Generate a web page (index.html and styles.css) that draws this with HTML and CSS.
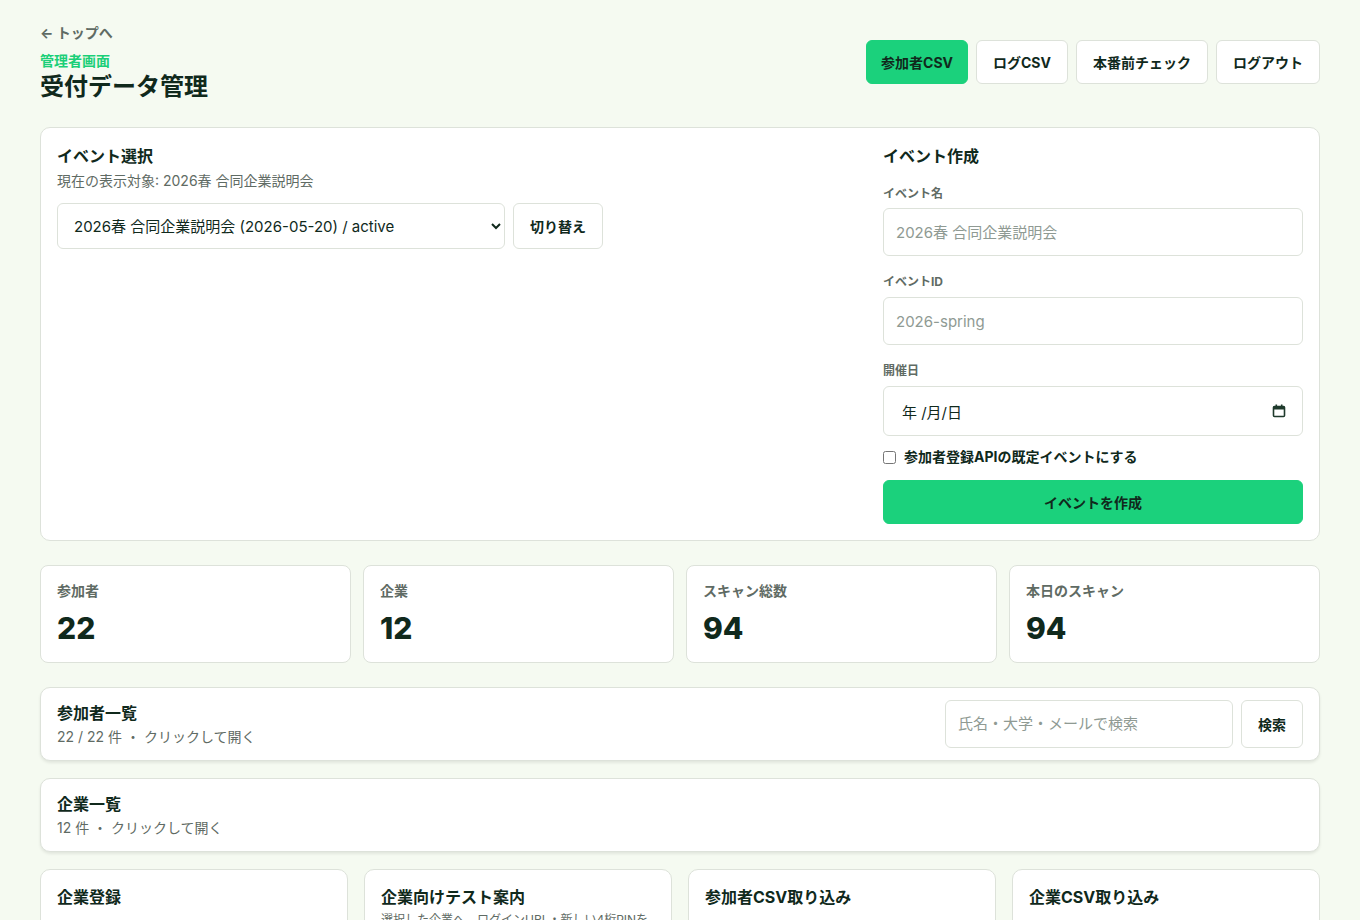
FILE: index.html
```html
<!DOCTYPE html>
<html lang="ja">
  <head>
    <meta charset="UTF-8" />
    <meta name="viewport" content="width=device-width, initial-scale=1.0" />
    <title>受付データ管理</title>
    <link rel="stylesheet" href="styles.css">
  </head>
  <body>
    <div class="page">
      <header class="page-header">
        <div>
          <a class="back-link" href="#">← トップへ</a>
          <p class="eyebrow">管理者画面</p>
          <h1>受付データ管理</h1>
        </div>
        <nav class="header-actions">
          <button class="btn btn-primary">参加者CSV</button>
          <button class="btn">ログCSV</button>
          <button class="btn">本番前チェック</button>
          <button class="btn">ログアウト</button>
        </nav>
      </header>

      <section class="panel event-panel">
        <div class="event-select">
          <h2>イベント選択</h2>
          <p class="muted">現在の表示対象: 2026春 合同企業説明会</p>
          <div class="select-row">
            <select class="field select">
              <option>2026春 合同企業説明会 (2026-05-20) / active</option>
            </select>
            <button class="btn">切り替え</button>
          </div>
        </div>
        <form class="event-create">
          <h2>イベント作成</h2>
          <label class="label first">イベント名</label>
          <input class="field" type="text" placeholder="2026春 合同企業説明会">
          <label class="label">イベントID</label>
          <input class="field" type="text" placeholder="2026-spring">
          <label class="label">開催日</label>
          <div class="field date-field">
            <span>年 /月/日</span>
            <svg width="14" height="14" viewBox="0 0 14 14">
              <rect x="1.5" y="2.5" width="11" height="10" rx="1" fill="none" stroke="#1f3a2c" stroke-width="1.6"/>
              <rect x="1.5" y="2.5" width="11" height="3" fill="#1f3a2c"/>
              <rect x="3.5" y="0.5" width="1.6" height="3" fill="#1f3a2c"/>
              <rect x="8.9" y="0.5" width="1.6" height="3" fill="#1f3a2c"/>
            </svg>
          </div>
          <label class="check-row">
            <input type="checkbox">
            <span>参加者登録APIの既定イベントにする</span>
          </label>
          <button type="button" class="btn btn-primary btn-block">イベントを作成</button>
        </form>
      </section>

      <section class="stats">
        <div class="stat-card">
          <p class="stat-label">参加者</p>
          <p class="stat-value">22</p>
        </div>
        <div class="stat-card">
          <p class="stat-label">企業</p>
          <p class="stat-value">12</p>
        </div>
        <div class="stat-card">
          <p class="stat-label">スキャン総数</p>
          <p class="stat-value">94</p>
        </div>
        <div class="stat-card">
          <p class="stat-label">本日のスキャン</p>
          <p class="stat-value">94</p>
        </div>
      </section>

      <section class="panel list-panel">
        <div>
          <h2>参加者一覧</h2>
          <p class="muted">22 / 22 件 ・ クリックして開く</p>
        </div>
        <div class="search-row">
          <input class="field search" type="text" placeholder="氏名・大学・メールで検索">
          <button class="btn">検索</button>
        </div>
      </section>

      <section class="panel list-panel">
        <div>
          <h2>企業一覧</h2>
          <p class="muted">12 件 ・ クリックして開く</p>
        </div>
      </section>

      <section class="tools">
        <div class="panel tool-card">
          <h2>企業登録</h2>
        </div>
        <div class="panel tool-card">
          <h2>企業向けテスト案内</h2>
          <p class="muted small">選択した企業へ、ログインURL・新しい4桁PINを送ります。</p>
        </div>
        <div class="panel tool-card">
          <h2>参加者CSV取り込み</h2>
          <p class="muted small spaced">列: 氏名, 大学, メール, 学年</p>
        </div>
        <div class="panel tool-card">
          <h2>企業CSV取り込み</h2>
          <p class="muted small spaced">列: 企業名, 担当者, メール</p>
        </div>
      </section>
    </div>
  </body>
</html>
```

FILE: styles.css
```css
* {
  box-sizing: border-box;
}
body {
  margin: 0;
  font-family: Inter, "Noto Sans CJK JP", sans-serif;
  color: #10291c;
  background-color: #f5faf1;
}
h1,
h2,
p {
  margin: 0;
}
.page {
  padding: 22px 40px 40px;
}
.page-header {
  display: flex;
  justify-content: space-between;
  align-items: flex-start;
  margin-bottom: 24px;
}
.back-link {
  display: inline-block;
  color: #5f6b64;
  font-size: 14px;
  font-weight: 700;
  line-height: 20px;
  text-decoration: none;
  margin-bottom: 9px;
}
.eyebrow {
  color: #1bcf78;
  font-size: 14px;
  font-weight: 700;
  line-height: 18px;
  margin-bottom: 1px;
}
h1 {
  font-size: 24px;
  font-weight: 700;
  line-height: 32px;
}
.header-actions {
  display: flex;
  gap: 8px;
  margin-top: 18px;
}
.btn {
  font-family: inherit;
  font-size: 14px;
  font-weight: 700;
  color: #10291c;
  background: #fff;
  border: 1px solid #dde2da;
  border-radius: 6px;
  height: 44px;
  padding: 0 16px;
  cursor: pointer;
}
.btn-primary {
  background: #1bd17c;
  border-color: #1bd17c;
}
.header-actions .btn-primary {
  padding: 0 14px;
}
.btn-block {
  width: 100%;
}
.panel {
  background: #fff;
  border: 1px solid #dde2da;
  border-radius: 10px;
}
h2 {
  font-size: 16px;
  font-weight: 700;
  line-height: 24px;
}
.muted {
  color: #5f6b64;
  font-size: 14px;
  line-height: 20px;
}
.small {
  font-size: 12px;
  line-height: 16px;
}
.event-panel {
  display: grid;
  grid-template-columns: 1fr 420px;
  gap: 24px;
  padding: 16px;
}
.event-select .muted {
  margin-top: 3px;
}
.select-row {
  display: flex;
  gap: 8px;
  margin-top: 12px;
}
.select-row .btn {
  height: 46px;
}
.field {
  font-family: inherit;
  font-size: 15px;
  color: #10291c;
  background: #fff;
  border: 1px solid #dde2da;
  border-radius: 6px;
  height: 48px;
  padding: 0 12px;
  width: 100%;
}
.field::placeholder {
  color: #8f9a93;
}
.select {
  width: 448px;
  height: 46px;
  padding-left: 12px;
}
.event-create {
  display: flex;
  flex-direction: column;
}
.label {
  font-size: 12px;
  font-weight: 700;
  color: #5f6b64;
  line-height: 16px;
  margin: 18px 0 7px;
}
.label.first {
  margin-top: 18px;
  margin-bottom: 6px;
}
.date-field {
  display: flex;
  align-items: center;
  justify-content: space-between;
  height: 50px;
  padding: 0 16px 0 18px;
}
.check-row {
  display: flex;
  align-items: center;
  gap: 8px;
  font-size: 14px;
  font-weight: 700;
  line-height: 18px;
  margin: 12px 0 14px;
}
.check-row input {
  margin: 0;
  width: 13px;
  height: 13px;
}
.stats {
  display: grid;
  grid-template-columns: repeat(4, 1fr);
  gap: 12px;
  margin: 24px 0;
}
.stat-card {
  background: #fff;
  border: 1px solid #dde2da;
  border-radius: 8px;
  padding: 15px 16px 14px;
  height: 98px;
}
.stat-label {
  font-size: 14px;
  font-weight: 700;
  color: #5f6b64;
  line-height: 20px;
}
.stat-value {
  font-size: 30px;
  font-weight: 800;
  line-height: 40px;
  margin-top: 7px;
}
.list-panel {
  display: flex;
  justify-content: space-between;
  align-items: center;
  padding: 0 16px 1px;
  height: 74px;
  margin-bottom: 17px;
  box-shadow: 0 2px 3px rgba(0, 0, 0, 0.08);
}
.list-panel .muted {
  margin-top: 2px;
}
.search-row {
  display: flex;
  gap: 8px;
}
.search {
  width: 288px;
  height: 48px;
}
.search-row .btn {
  height: 48px;
}
.tools {
  display: grid;
  grid-template-columns: repeat(4, 1fr);
  gap: 16px;
}
.tool-card {
  padding: 15px 16px;
  min-height: 160px;
}
.tool-card .muted {
  margin-top: 3px;
}
.tool-card .spaced {
  margin-top: 12px;
}
```
